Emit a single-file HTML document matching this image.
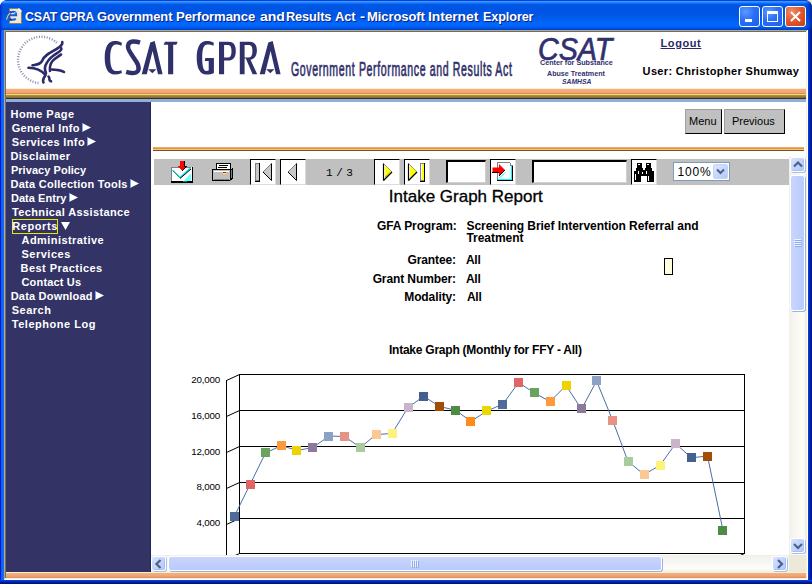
<!DOCTYPE html>
<html><head><meta charset="utf-8">
<style>
*{margin:0;padding:0;box-sizing:border-box}
html,body{width:812px;height:584px;overflow:hidden;background:linear-gradient(to right,#fff 0,#fff 406px,#ece9d8 406px);font-family:"Liberation Sans",sans-serif}
.a{position:absolute}
#win{position:absolute;left:0;top:0;width:812px;height:584px;overflow:hidden;border-radius:7px 7px 0 0;
 background:linear-gradient(to right,#0019cf 0,#0019cf 1px,#0a5ef0 1px,#1a6df5 4px,#0055e5 4px,#0055e5 808px,#0644e0 808px,#0035d0 809px,#0025a8 810px,#00168a 811px)}
#bottomb{left:0;top:580px;width:812px;height:4px;background:linear-gradient(#0845e8 0,#0035d6 1px,#0022a8 2px,#001488 3px,#001080 4px)}
#title{left:0;top:0;width:812px;height:30px;border-radius:7px 7px 0 0;
 background:linear-gradient(to bottom,#0043d8 0px,#0043d8 1px,#3d95ff 1px,#3d95ff 2px,#2a82ff 2px,#2a82ff 3px,#0a6cf8 3px,#0a6cf8 4px,#005ae8 4px,#0054e2 8px,#0055e4 14px,#005ff0 20px,#0066ff 23px,#0064fb 27px,#0052dc 28px,#0040c8 30px)}
.tt{top:8.5px;transform-origin:0 0;color:#fff;font-weight:bold;font-size:13px;line-height:15px;letter-spacing:-0.1px;white-space:nowrap;text-shadow:1px 1px 0 #0a1e7a}
.tb{width:21px;height:21px;top:6px;border:1px solid #fff;border-radius:3px}
.nav{position:absolute;left:11px;color:#fff;font-weight:bold;font-size:11px;line-height:14px;white-space:nowrap;letter-spacing:0.2px}
.arr{display:inline-block;width:0;height:0;border-top:4px solid transparent;border-bottom:4px solid transparent;border-left:8px solid #fff;vertical-align:0px;margin-left:5px}
.btn{position:absolute;top:159px;width:26px;height:26px;background:#fff;border-top:1px solid #000;border-left:1px solid #000;border-right:1px solid #dcdcdc;border-bottom:1px solid #dcdcdc}
.big{top:34.5px;font-size:48px;line-height:48px;font-weight:bold;color:#30306a;transform-origin:0 0;white-space:nowrap}
.gbtn{position:absolute;top:109px;height:25px;background:#c0c0c0;border-top:1px solid #a0a0a0;border-left:1px solid #a0a0a0;border-right:1px solid #000;border-bottom:1px solid #000}
.gbtn span{position:absolute;top:4.5px;font-size:11px;line-height:12px;color:#000;white-space:nowrap}
.mono{top:167px;font-family:"Liberation Mono",monospace;font-size:11px;line-height:12px;color:#000}
.tbox{top:160px;height:23px;background:#fff;border-top:2px solid #000;border-left:2px solid #000;border-right:1px solid #d0d0d0;border-bottom:1px solid #d0d0d0}
.sbb{width:15px;height:15px;border:1px solid #fff;border-radius:3px;background:linear-gradient(135deg,#d6e2fd 0,#c3d3fd 50%,#b2c8fb 100%);box-shadow:inset -1px -1px 0 #aac0f4,1px 1px 0 #a9bde6}
.sbt{border:1px solid #fff;border-radius:3px;box-shadow:1px 1px 0 #9bb0da}
.lbl{position:absolute;font-weight:bold;font-size:12px;line-height:12px;color:#000;white-space:nowrap;letter-spacing:-0.3px}
.yl{position:absolute;left:150px;width:70px;text-align:right;font-size:9.8px;line-height:10px;color:#000;letter-spacing:-0.2px}
</style></head><body>
<div id="win">
 <div id="title" class="a"></div>
 <div class="a" style="left:804px;top:0;width:8px;height:30px;border-top-right-radius:7px;background:linear-gradient(to right,rgba(0,30,160,0) 0,rgba(0,40,180,0.35) 4px,rgba(0,20,140,0.8) 8px)"></div>
 <div class="a" style="left:0;top:0;width:3px;height:30px;border-top-left-radius:7px;background:linear-gradient(to right,rgba(0,20,190,0.7),rgba(0,40,200,0))"></div>
 <!-- IE icon -->
 <svg class="a" style="left:0;top:0" width="30" height="30">
  <path d="M9.5 8.5h9l3 3v12h-12z" fill="#ebe8dc" stroke="#8a8064" stroke-width="1"/>
  <path d="M18.5 8.5l3 3" stroke="#fff" stroke-width="1.5"/>
  <path d="M15.8 18.8c-0.8 0.6-2 1-3.2 1-2.1 0-3.4-1.7-3.4-3.9 0-2.3 1.6-4.1 3.7-4.1 2 0 3.3 1.5 3.3 3.5h-6" fill="none" stroke="#1d55d8" stroke-width="1.9"/>
  <path d="M6.5 19.5c0.6-2.8 1.8-5.2 3.8-7.2" fill="none" stroke="#e8c860" stroke-width="1.2"/>
  <path d="M9.5 12.5l1.5-1" stroke="#0020a0" stroke-width="1.2"/>
  <rect x="14" y="12" width="1.5" height="1.5" fill="#40e8ff"/>
  <path d="M9.5 20h2" stroke="#000" stroke-width="1"/>
 </svg>
 <div class="a tt" style="left:25.0px;transform:scaleX(0.948)">CSAT</div>
 <div class="a tt" style="left:59.7px;transform:scaleX(0.911)">GPRA</div>
 <div class="a tt" style="left:97.3px;transform:scaleX(0.997)">Government</div>
 <div class="a tt" style="left:176.0px;transform:scaleX(1.010)">Performance</div>
 <div class="a tt" style="left:260.0px;transform:scaleX(1.086)">and</div>
 <div class="a tt" style="left:286.0px;transform:scaleX(0.980)">Results</div>
 <div class="a tt" style="left:334.6px;transform:scaleX(0.995)">Act</div>
 <div class="a tt" style="left:360.0px;transform:scaleX(1.150)">-</div>
 <div class="a tt" style="left:367.1px;transform:scaleX(1.002)">Microsoft</div>
 <div class="a tt" style="left:428.3px;transform:scaleX(1.070)">Internet</div>
 <div class="a tt" style="left:483.3px;transform:scaleX(0.971)">Explorer</div>

 <!-- title buttons -->
 <div class="a tb" style="left:739px;background:radial-gradient(circle at 30% 25%,#5b9bff 0,#2b6ff8 45%,#1d5ee8 100%)"><div class="a" style="left:5px;top:12px;width:7px;height:3px;background:#fff"></div></div>
 <div class="a tb" style="left:762px;background:radial-gradient(circle at 30% 25%,#5b9bff 0,#2b6ff8 45%,#1d5ee8 100%)"><div class="a" style="left:4px;top:4px;width:11px;height:11px;border:1px solid #fff;border-top-width:3px"></div></div>
 <div class="a tb" style="left:785px;background:radial-gradient(circle at 30% 25%,#f08a6a 0,#e2572e 50%,#c83d12 100%)">
  <svg class="a" style="left:0;top:0" width="19" height="19"><path d="M5 5L14 14M14 5L5 14" stroke="#fff" stroke-width="2"/></svg></div>

 <!-- client edges -->
 <div class="a" style="left:4px;top:30px;width:804px;height:1px;background:#aca899"></div>
 <div class="a" style="left:4px;top:30px;width:1px;height:550px;background:#aca899"></div>
 <div class="a" style="left:5px;top:31px;width:802px;height:1px;background:#716f64"></div>
 <div class="a" style="left:5px;top:31px;width:1px;height:548px;background:#716f64"></div>
 <div class="a" style="left:807px;top:30px;width:1px;height:550px;background:#fff"></div>
 <div class="a" style="left:4px;top:579px;width:804px;height:1px;background:#fff"></div>
 <div class="a" style="left:806px;top:31px;width:1px;height:548px;background:#f1efe2"></div>
 <div class="a" style="left:5px;top:578px;width:802px;height:1px;background:#f1efe2"></div>
 <div id="bottomb" class="a"></div>

 <!-- document -->
 <div class="a" style="left:6px;top:32px;width:800px;height:546px;background:#fff;overflow:hidden">
 </div>
 <!-- header bands -->
 <div class="a" style="left:6px;top:88px;width:800px;height:11px;background:linear-gradient(#fff0c0 0,#fff0c0 1px,#f0b088 1px,#eea47a 5px,#e88848 5px,#e88848 6px,#f8d868 6px,#f8d868 7px,#b09848 7px,#806830 10px,#403010 10px,#403010 11px)"></div>
 <div class="a" style="left:6px;top:99px;width:800px;height:3px;background:#8eb0e0"></div>
 <div class="a" style="left:6px;top:102px;width:145px;height:470px;background:#333366;border-right:1px solid #22225a"></div>
 <div class="a" style="left:6px;top:572px;width:800px;height:6px;background:linear-gradient(#fff0c0 0,#fff0c0 1px,#f0b088 1px,#eea47a 4px,#e88848 6px)"></div>



 <!-- HHS logo -->
 <svg class="a" style="left:0;top:30px" width="80" height="60" viewBox="0 30 80 60">
  <path d="M38.5 83.0 A23.2 23.2 0 1 1 57.7 43.6" fill="none" stroke="#3a3a7a" stroke-width="2.4" stroke-dasharray="1 1.6" opacity="0.6"/>
  <g fill="none" stroke="#2b2b6b" stroke-width="2.6" stroke-linecap="round">
   <path d="M32.5 65.3C37 64.5 40.8 64.5 42.3 60.5C44 55.5 50 52.5 56.5 49C60 47 63 45 62.3 42"/>
   <path d="M46 73C44.3 69.5 45 65.5 47 62.5C49.5 57.5 54 55 58 52.5C60.5 51 62 50 61.3 48.3"/>
   <path d="M50 71C49.5 67 50.5 63.5 52.5 61C54.5 58.5 58 57 61 54.5"/>
   <path d="M52 69.5C56 70 60 69.5 64 72"/>
   <path d="M28.5 67.8C35 68 42 71 45.5 75C44 77.5 42 80 43.5 82.5"/>
   <path d="M48.5 76.5C50.5 78 48 80.5 51 81.3"/>
  </g>
 </svg>
 <!-- header content -->
 <svg class="a" style="left:0;top:0" width="300" height="90" viewBox="0 0 300 90">
  <g fill="#30306a" fill-rule="evenodd">
   <path d="M121.9 42.8C119.5 41.5 117 41.1 114.5 41.1C108 41.1 104.7 47.5 104.7 57.8C104.7 68.2 108 74.5 114.5 74.5C117 74.5 119.5 74 121.9 73L121.4 70.2C119.7 70.8 118 71.1 116 71.1C112.2 71.1 110.2 66.5 110.2 57.8C110.2 49 112.2 44.5 116 44.5C118 44.5 119.7 45 121.4 45.8Z"/>
   <path d="M141.7 74.3L150.3 42.6L154.7 41L162.6 74.3H158L152.6 51L146.8 74.3Z M148.2 69.2H156.4L152.3 73.3Z"/>
   <path d="M163.6 44.8L165 41.8H177.7L176.3 44.8H173.2V74.3H168.1V44.8Z"/>
   <path d="M213.9 42.8C211.5 41.5 209 41.1 206.5 41.1C200 41.1 196.7 47.5 196.7 57.8C196.7 68.2 200 74.6 206.5 74.6C209.5 74.6 211.8 74 213.9 73V57.9H205.3L204.8 61H208.7V70.6C207.8 70.9 207 71.1 206.5 71.1C203.5 71.1 202.2 66.5 202.2 57.8C202.2 49 203.5 44.5 207.5 44.5C209.5 44.5 211.7 45 213.4 45.8Z"/>
   <path d="M219 74.3V41.8H228.5C233.5 41.8 235.8 45 235.8 51C235.8 57.5 233 60.6 228 60.6H224.1V74.3Z M224.1 45V57.6H227.5C230.5 57.6 231.5 55.5 231.5 51.3C231.5 47 230.5 45 227.5 45Z"/>
   <path d="M239.8 74.3V41.8H249.5C254.5 41.8 256.9 45 256.9 50.5C256.9 55.5 254.5 59 250.5 59.7L257.2 74.3H252.6L245.8 58.5H244.6V74.3Z M244.6 45V57.4H248.5C251.5 57.4 252.4 55 252.4 51C252.4 47 251.5 45 248.5 45Z"/>
   <path d="M259.7 74.3L268.3 42.6L272.7 41L280.6 74.3H276L270.6 51L264.8 74.3Z M266.2 69.2H274.4L270.3 73.3Z"/>
  </g>
  <path d="M140 42.6C137.5 41.7 135 41.3 132.5 41.5C128.5 42 127.5 45 128.3 48.5C129 51 130.5 53 132.5 56L136.5 62C138.5 65 139 67 138.5 69.5C138 72.5 134.5 73.3 131.5 73C129.5 72.8 127.8 72.3 126.2 71.8" fill="none" stroke="#30306a" stroke-width="4.4"/>
 </svg> <div id="gov" class="a" style="left:291.3px;top:58.5px;font-size:20px;line-height:20px;letter-spacing:1.2px;-webkit-text-stroke:0.7px #30306a;transform:scaleX(0.527);color:#30306a;white-space:nowrap;transform-origin:0 0">Government Performance and Results Act</div>
 <div id="csat" class="a" style="left:538px;top:34px;font-size:31px;line-height:31px;font-style:italic;-webkit-text-stroke:0.7px #30306e;transform:scaleX(0.925);color:#30306e;white-space:nowrap;transform-origin:0 0">CSAT</div>
 <div id="cfs" class="a" style="left:539.6px;top:59.3px;font-size:8px;line-height:8px;font-weight:bold;transform:scaleX(0.9);color:#30306e;white-space:nowrap;transform-origin:0 0">Center for Substance</div>
 <div id="abt" class="a" style="left:547px;top:69.5px;font-size:8px;line-height:8px;font-weight:bold;transform:scaleX(0.892);color:#30306e;white-space:nowrap;transform-origin:0 0">Abuse Treatment</div>
 <div id="sam" class="a" style="left:562px;top:77.8px;font-size:7px;line-height:7px;font-weight:bold;font-style:italic;transform:scaleX(0.967);color:#30306e;white-space:nowrap;transform-origin:0 0">SAMHSA</div>
 <div id="logout" class="a" style="left:660.5px;top:37px;font-size:11px;line-height:12px;letter-spacing:0.6px;font-weight:bold;color:#2a2a66;text-decoration:underline;white-space:nowrap">Logout</div>
 <div id="user" class="a" style="left:642.6px;top:64.5px;font-size:11px;line-height:12px;letter-spacing:0.35px;font-weight:bold;color:#000;white-space:nowrap">User: Christopher Shumway</div>

 <!-- content buttons -->
 <div class="a gbtn" style="left:685px;width:37px"><span style="left:3px">Menu</span></div>
 <div class="a gbtn" style="left:724px;width:61px"><span style="left:7px">Previous</span></div>
 <div class="a" style="left:153px;top:147px;width:651px;height:4px;background:linear-gradient(#f0a878 0,#f0a878 1px,#e88a50 1px,#e88a50 2px,#f5d060 2px,#f5d060 3px,#6a5420 3px)"></div>
 <!-- toolbar -->
 <div class="a" style="left:154px;top:159px;width:635px;height:26px;background:#c0c0c0"></div>
 <div class="btn" style="left:250px"></div>
 <div class="btn" style="left:280px"></div>
 <div class="a mono" style="left:326px">1</div><div class="a mono" style="left:336.2px">/</div><div class="a mono" style="left:346.3px">3</div>
 <div class="btn" style="left:374px"></div>
 <div class="btn" style="left:404px"></div>
 <div class="a tbox" style="left:446px;width:40px"></div>
 <div class="btn" style="left:490px"></div>
 <div class="a tbox" style="left:532px;width:95px"></div>
 <div class="btn" style="left:631px"></div>
 <div class="a" style="left:673px;top:162px;width:57px;height:19px;border:1px solid #7f9db9;background:#fff"></div>
 <div class="a" style="left:677.5px;top:166px;font-size:12px;line-height:12px;letter-spacing:0.8px;color:#000">100%</div>
 <div class="a" style="left:713px;top:164px;width:15px;height:15px;border-radius:2px;background:linear-gradient(135deg,#dce6fd,#b4c8f8);border:1px solid #c3d3fd"></div>
 <svg class="a" style="left:713px;top:164px" width="15" height="15"><path d="M4 5.5l3.5 3.5 3.5-3.5" fill="none" stroke="#4d6185" stroke-width="2"/></svg>


 <!-- toolbar icons -->
 <svg class="a" style="left:154px;top:159px" width="635" height="26" viewBox="154 159 635 26">
  <g shape-rendering="crispEdges">
   <!-- envelope -->
   <rect x="171" y="167" width="21" height="15" fill="#fff"/>
   <path d="M171.5 182V167.5H191" stroke="#808080" fill="none"/>
   <path d="M171 181.5H192.5V167" stroke="#000" stroke-width="1" fill="none"/>
   <path d="M171 182.5H193" stroke="#000"/>
   <path d="M182 182L191 173V181Z" fill="#00ffff" opacity="0.55"/>
  </g>
  <path d="M172.5 170L180 177.5L190.5 168" stroke="#00e0e8" stroke-width="1.3" fill="none"/>
  <path d="M180 178.5L191 169" stroke="#000" stroke-width="1" fill="none"/>
  <path d="M173 171L179.5 177.5" stroke="#804040" stroke-width="0.6" fill="none"/>
  <g shape-rendering="crispEdges">
   <path d="M180 161h4v5h3l-5 5-5-5h3z" fill="#ff0000"/>
   <path d="M184.5 161v5.5h2.5M182 171l5-5" stroke="#000" stroke-width="1" fill="none"/>
  </g>
  <!-- printer -->
  <g shape-rendering="crispEdges">
   <path d="M217 163h13v6h-14z" fill="#fff" stroke="#000" stroke-width="1"/>
   <path d="M219 165.5h9M218 167.5h9" stroke="#000"/>
   <rect x="212.5" y="169.5" width="18" height="11" rx="1" fill="#c0c0c0" stroke="#000"/>
   <path d="M214 171.5h15" stroke="#fff"/>
   <path d="M214 179.5h15" stroke="#808080"/>
   <path d="M230.5 170l2 -1.5V178l-2 2.5" fill="#808080" stroke="#000"/>
   <rect x="223" y="172" width="3" height="1" fill="#ff0000"/>
   <rect x="223" y="173" width="3" height="1" fill="#ffff00"/>
  </g>
  <!-- first -->
  <g shape-rendering="crispEdges">
   <rect x="255.5" y="163.5" width="4" height="17" fill="#c8c8c8" stroke="#808080"/>
   <path d="M259.5 163v18H255" stroke="#000" fill="none"/>
  </g>
  <path d="M271.5 163.5L263 172L271.5 180.5Z" fill="#c8c8c8" stroke="none"/>
  <path d="M263 172L271.5 163.5" stroke="#808080" fill="none"/>
  <path d="M263 172L271.5 180.5V163.5" stroke="#000" fill="none"/>
  <!-- prev -->
  <path d="M296.5 163.5L288 172L296.5 180.5Z" fill="#c8c8c8" stroke="none"/>
  <path d="M288 172L296.5 163.5" stroke="#808080" fill="none"/>
  <path d="M288 172L296.5 180.5V163.5" stroke="#000" fill="none"/>
  <!-- next -->
  <path d="M383.5 163.5L392 172L383.5 180.5Z" fill="#ffff00"/>
  <path d="M384.5 165V179" stroke="#fff" stroke-width="1.2"/>
  <path d="M383.5 180.5L392 172" stroke="#000" stroke-width="1.2" fill="none"/>
  <path d="M383.5 163.5V180.5" stroke="#000" stroke-width="1.2"/>
  <path d="M383.5 163.5L392 172" stroke="#808080" stroke-width="0.8"/>
  <path d="M385 177L390 172.5" stroke="#a0a000" stroke-width="0.8"/>
  <!-- last -->
  <path d="M408.5 163.5L417 172L408.5 180.5Z" fill="#ffff00"/>
  <path d="M409.5 165V179" stroke="#fff" stroke-width="1.2"/>
  <path d="M408.5 180.5L417 172" stroke="#000" stroke-width="1.2" fill="none"/>
  <path d="M408.5 163.5V180.5" stroke="#000" stroke-width="1.2"/>
  <path d="M408.5 163.5L417 172" stroke="#808080" stroke-width="0.8"/>
  <g shape-rendering="crispEdges">
   <rect x="420.5" y="163.5" width="4" height="17" fill="#ffff00" stroke="#808080"/>
   <rect x="421" y="164" width="1" height="15" fill="#fff"/>
   <path d="M424.5 163v18H420" stroke="#000" fill="none"/>
  </g>
  <!-- export doc -->
  <g shape-rendering="crispEdges">
   <path d="M497 162h13l3 3v16h-16z" fill="#fff"/>
   <path d="M497.5 180V162.5H510" stroke="#808080" fill="none"/>
   <path d="M512.5 165V180.5H497" stroke="#000" fill="none"/>
   <path d="M511.5 166V179.5H498" stroke="#00ffff" fill="none"/>
   <path d="M510 162.5v3h3" stroke="#808080" fill="none"/>
  </g>
  <path d="M492.5 167.5h6.5v-3.5l6 6-6 6v-3.5h-6.5z" fill="#ff0000"/>
  <path d="M492 172.5h7M499 176l6-6" stroke="#000" stroke-width="1" fill="none"/>
  <path d="M498.5 176.5L504 171" stroke="#00e0e8" stroke-width="1" fill="none" transform="translate(1,1.5)"/>
  <!-- binoculars -->
  <g shape-rendering="crispEdges" fill="#000">
   <rect x="637" y="163" width="5" height="6"/><rect x="646" y="163" width="5" height="6"/>
   <rect x="636" y="168" width="7" height="3"/><rect x="645" y="168" width="7" height="3"/>
   <rect x="634" y="171" width="7" height="11"/><rect x="647" y="171" width="7" height="11"/>
   <rect x="641" y="170" width="6" height="6"/>
   <rect x="638" y="164" width="2" height="1" fill="#fff"/><rect x="647" y="164" width="2" height="1" fill="#fff"/>
   <rect x="635" y="174" width="1" height="6" fill="#fff"/><rect x="648" y="176" width="1" height="5" fill="#fff"/>
   <rect x="642" y="172" width="1" height="2" fill="#fff"/><rect x="638" y="171" width="1" height="3" fill="#fff"/><rect x="646" y="171" width="1" height="3" fill="#fff"/>
  </g>
 </svg>
 <!-- report -->
 <div id="rt" class="a" style="left:388.8px;top:188px;font-size:17px;line-height:17px;letter-spacing:0px;-webkit-text-stroke:0.3px #000;color:#000;white-space:nowrap">Intake Graph Report</div>
 <div class="lbl" style="left:377px;top:220px;letter-spacing:-0.1px">GFA Program:</div>
 <div class="lbl" style="left:466.5px;top:220px;letter-spacing:-0.05px">Screening Brief Intervention Referral and</div>
 <div class="lbl" style="left:466.5px;top:232px;letter-spacing:-0.05px">Treatment</div>
 <div class="lbl" style="left:356px;width:100px;text-align:right;top:254px;letter-spacing:-0.1px">Grantee:</div>
 <div class="lbl" style="left:356px;width:100px;text-align:right;top:273px;letter-spacing:-0.1px">Grant Number:</div>
 <div class="lbl" style="left:356px;width:100px;text-align:right;top:291px;letter-spacing:-0.1px">Modality:</div>
 <div class="lbl" style="left:466px;top:254px">All</div>
 <div class="lbl" style="left:466px;top:273px">All</div>
 <div class="lbl" style="left:467px;top:291px">All</div>
 <div class="a" style="left:664px;top:258px;width:9px;height:17px;border:1px solid #000;background:#ffffe0"></div>
 <div class="lbl" style="left:389px;top:344px;letter-spacing:-0.24px">Intake Graph (Monthly for FFY - All)</div>
 <!-- chart -->
 <svg class="a" style="left:151px;top:157px" width="638" height="398" viewBox="151 157 638 398">
<g stroke="#000" stroke-width="1" shape-rendering="crispEdges" fill="none"><path d="M239 374.5H745"/><path d="M239 410.5H745"/><path d="M239 446.5H745"/><path d="M239 482.5H745"/><path d="M239 518.5H745"/><path d="M239 553.5H745"/><path d="M226.5 380V560M239.5 374V554M744.5 374V554"/></g><g stroke="#000" stroke-width="1" fill="none"><path d="M226.5 380.5L239.5 374.5"/><path d="M226.5 416.5L239.5 410.5"/><path d="M226.5 452.5L239.5 446.5"/><path d="M226.5 488.5L239.5 482.5"/><path d="M226.5 524.5L239.5 518.5"/><path d="M226.5 559.5L239.5 553.5"/><path d="M744.5 553.5L731.5 559.5"/></g>
<path d="M234 517 L250 484.5 L265.5 453 L281.5 445.5 L297 450.5 L313 447.5 L329 436 L344.5 436.5 L360.5 447.5 L376 434.5 L392 433.5 L408 407.5 L423.6 396.3 L439.5 406.4 L455.5 410.3 L471 421.3 L487 411 L503 404 L518.6 382.5 L534.4 393 L550 401.5 L566 385.6 L581.5 409 L596.6 381 L612.7 420.5 L628 461.4 L644 474.5 L660 465.4 L675.5 443.7 L691.5 457.8 L707.5 456 L723 530.5" fill="none" stroke="#4065a3" stroke-width="0.95"/>
<rect x="230" y="512" width="9" height="9" fill="#4f6b9c"/><rect x="246" y="480" width="9" height="9" fill="#e06666"/><rect x="261" y="448" width="9" height="9" fill="#6aa35e"/><rect x="277" y="441" width="9" height="9" fill="#fd9a3c"/><rect x="292" y="446" width="9" height="9" fill="#eed300"/><rect x="308" y="443" width="9" height="9" fill="#8c7a9d"/><rect x="324" y="432" width="9" height="9" fill="#8aa3c4"/><rect x="340" y="432" width="9" height="9" fill="#e59385"/><rect x="356" y="443" width="9" height="9" fill="#a9cc9f"/><rect x="372" y="430" width="9" height="9" fill="#fdc794"/><rect x="388" y="429" width="9" height="9" fill="#fef27f"/><rect x="404" y="403" width="9" height="9" fill="#c9b4c9"/><rect x="419" y="392" width="9" height="9" fill="#44608e"/><rect x="435" y="402" width="9" height="9" fill="#a34c04"/><rect x="451" y="406" width="9" height="9" fill="#4f8c43"/><rect x="466" y="417" width="9" height="9" fill="#ff8c1a"/><rect x="482" y="406" width="9" height="9" fill="#e8d800"/><rect x="498" y="400" width="9" height="9" fill="#4f6b9c"/><rect x="514" y="378" width="9" height="9" fill="#e06666"/><rect x="530" y="388" width="9" height="9" fill="#6aa35e"/><rect x="546" y="397" width="9" height="9" fill="#fd9a3c"/><rect x="562" y="381" width="9" height="9" fill="#eed300"/><rect x="577" y="404" width="9" height="9" fill="#8c7a9d"/><rect x="592" y="376" width="9" height="9" fill="#8aa3c4"/><rect x="608" y="416" width="9" height="9" fill="#e59385"/><rect x="624" y="457" width="9" height="9" fill="#a9cc9f"/><rect x="640" y="470" width="9" height="9" fill="#fdc794"/><rect x="656" y="461" width="9" height="9" fill="#fef27f"/><rect x="671" y="439" width="9" height="9" fill="#c9b4c9"/><rect x="687" y="453" width="9" height="9" fill="#44608e"/><rect x="703" y="452" width="9" height="9" fill="#a34c04"/><rect x="718" y="526" width="9" height="9" fill="#4f8c43"/>
</svg>
 <div class="yl" style="left:171px;width:49px;top:calc(376.0px - 0.8px)">20,000</div>
 <div class="yl" style="left:171px;width:49px;top:calc(411.5px - 0.8px)">16,000</div>
 <div class="yl" style="left:171px;width:49px;top:calc(448.0px - 0.8px)">12,000</div>
 <div class="yl" style="left:171px;width:49px;top:calc(483.1px - 0.8px)">8,000</div>
 <div class="yl" style="left:171px;width:49px;top:calc(518.9px - 0.8px)">4,000</div>

 <!-- scrollbars -->
 <div class="a" style="left:789px;top:157px;width:17px;height:398px;background:linear-gradient(to right,#eeede5 0,#f3f1ec 1px,#fdfdfa 14px,#f1efe6 17px)"></div>
 <div class="a" style="left:151px;top:555px;width:638px;height:17px;background:linear-gradient(#eeede5 0,#f3f1ec 1px,#fdfdfa 14px,#f1efe6 17px)"></div>
 <div class="a" style="left:789px;top:555px;width:17px;height:17px;background:#ebe9d9"></div>
 <div class="a sbb" style="left:790px;top:157px"></div>
 <svg class="a" style="left:790px;top:157px" width="16" height="16"><path d="M4 9.5l4-4 4 4" fill="none" stroke="#4d6185" stroke-width="2.2"/></svg>
 <div class="a sbb" style="left:790px;top:538px"></div>
 <svg class="a" style="left:790px;top:538px" width="16" height="16"><path d="M4 6l4 4 4-4" fill="none" stroke="#4d6185" stroke-width="2.2"/></svg>
 <div class="a sbb" style="left:151px;top:556px"></div>
 <svg class="a" style="left:151px;top:556px" width="16" height="16"><path d="M9.5 4l-4 4 4 4" fill="none" stroke="#4d6185" stroke-width="2.2"/></svg>
 <div class="a sbb" style="left:772px;top:556px"></div>
 <svg class="a" style="left:772px;top:556px" width="16" height="16"><path d="M6 4l4 4-4 4" fill="none" stroke="#4d6185" stroke-width="2.2"/></svg>
 <div class="a sbt" style="left:790px;top:175px;width:15px;height:136px;background:linear-gradient(to right,#c9d5fd,#b8cbfc)"></div>
 <svg class="a" style="left:790px;top:175px" width="16" height="138"><g shape-rendering="crispEdges"><path d="M4 64.5h7M4 66.5h7M4 68.5h7M4 70.5h7" stroke="#eef2fe"/><path d="M5 65.5h7M5 67.5h7M5 69.5h7M5 71.5h7" stroke="#8cacee"/></g></svg>
 <div class="a sbt" style="left:168px;top:556px;width:494px;height:15px;background:linear-gradient(#c9d5fd,#b8cbfc)"></div>
 <svg class="a" style="left:168px;top:556px" width="494" height="16"><g shape-rendering="crispEdges"><path d="M243.5 4v7M245.5 4v7M247.5 4v7M249.5 4v7" stroke="#eef2fe"/><path d="M244.5 5v7M246.5 5v7M248.5 5v7M250.5 5v7" stroke="#8cacee"/></g></svg>
 <!-- nav -->
 <svg class="a" style="left:0;top:0" width="160" height="340">
  <path d="M82 123L91 127.5L82 132Z" fill="#fff"/><path d="M82.5 123V132" stroke="#6aaaff" stroke-width="1"/>
  <path d="M87 137L96 141.5L87 146Z" fill="#fff"/><path d="M87.5 137V146" stroke="#6aaaff" stroke-width="1"/>
  <path d="M130 179L139 183.5L130 188Z" fill="#fff"/><path d="M130.5 179V188" stroke="#6aaaff" stroke-width="1"/>
  <path d="M69 193L78 197.5L69 202Z" fill="#fff"/><path d="M69.5 193V202" stroke="#6aaaff" stroke-width="1"/>
  <path d="M95 291L104 295.5L95 300Z" fill="#fff"/><path d="M95.5 291V300" stroke="#6aaaff" stroke-width="1"/>
  <path d="M61 222H70L65.5 230Z" fill="#fff"/>
 </svg>
 <div class="nav" style="top:107px;left:10.5px;letter-spacing:0.45px">Home Page</div>
 <div class="nav" style="top:121px;left:11.7px;letter-spacing:0.32px">General Info</div>
 <div class="nav" style="top:135px;left:11.7px;letter-spacing:0.37px">Services Info</div>
 <div class="nav" style="top:149px;left:10.5px;letter-spacing:0.43px">Disclaimer</div>
 <div class="nav" style="top:163px;left:10.9px;letter-spacing:0.05px">Privacy Policy</div>
 <div class="nav" style="top:177px;left:10.5px;letter-spacing:0.26px">Data Collection Tools</div>
 <div class="nav" style="top:191px;left:10.9px;letter-spacing:0.06px">Data Entry</div>
 <div class="nav" style="top:205px;left:12.0px;letter-spacing:0.37px">Technical Assistance</div>
 <div class="a" style="left:12px;top:219px;width:46px;height:15px;border:1px solid #e8e800"></div>
 <div class="nav" style="top:219px;left:12.3px;letter-spacing:0.58px">Reports</div>
 <div class="nav" style="top:233px;left:21.5px;letter-spacing:0.44px">Administrative</div>
 <div class="nav" style="top:247px;left:21.5px;letter-spacing:0.50px">Services</div>
 <div class="nav" style="top:261px;left:20.5px;letter-spacing:0.45px">Best Practices</div>
 <div class="nav" style="top:275px;left:21.5px;letter-spacing:0.17px">Contact Us</div>
 <div class="nav" style="top:289px;left:10.7px;letter-spacing:0.20px">Data Download</div>
 <div class="nav" style="top:303px;left:11.7px;letter-spacing:0.52px">Search</div>
 <div class="nav" style="top:317px;left:11.7px;letter-spacing:0.54px">Telephone Log</div>
</div>
</body></html>
